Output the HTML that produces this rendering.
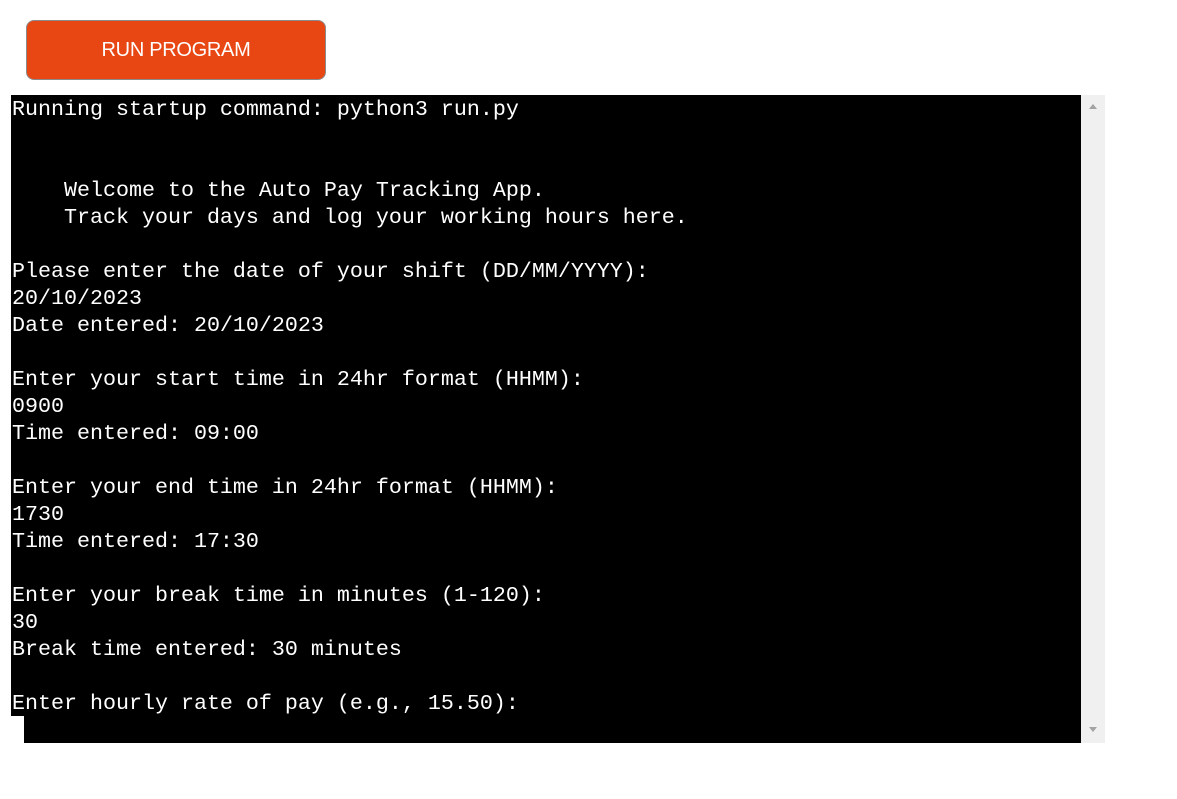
<!DOCTYPE html>
<html><head><style>
html,body{margin:0;padding:0;background:#fff;width:1177px;height:799px;overflow:hidden}
.btn{position:absolute;left:26px;top:20px;width:298px;height:58px;background:#e84612;border:1px solid #8a8a8a;border-radius:8px;color:#fff;font:20px "Liberation Sans",sans-serif;text-align:center;line-height:58px;letter-spacing:-0.3px}
.term{position:absolute;left:11px;top:95px;width:1070px;height:621px;background:#000}
.term2{position:absolute;left:24px;top:716px;width:1057px;height:27px;background:#000}
.sb{position:absolute;left:1081px;top:95px;width:24px;height:648px;background:#f0f0f0}
.up{position:absolute;left:1089px;top:104px;width:0;height:0;border-left:4px solid transparent;border-right:4px solid transparent;border-bottom:5px solid #a3a3a3}
.dn{position:absolute;left:1089px;top:727px;width:0;height:0;border-left:4px solid transparent;border-right:4px solid transparent;border-top:5px solid #a3a3a3}
pre{position:absolute;left:12px;top:96px;margin:0;color:#fff;font:21.67px/27px "Liberation Mono",monospace}
</style></head><body>
<div class="btn">RUN PROGRAM</div>
<div class="term"></div><div class="term2"></div>
<div class="sb"></div><div class="up"></div><div class="dn"></div>
<pre>Running startup command: python3 run.py


    Welcome to the Auto Pay Tracking App.
    Track your days and log your working hours here.

Please enter the date of your shift (DD/MM/YYYY):
20/10/2023
Date entered: 20/10/2023

Enter your start time in 24hr format (HHMM):
0900
Time entered: 09:00

Enter your end time in 24hr format (HHMM):
1730
Time entered: 17:30

Enter your break time in minutes (1-120):
30
Break time entered: 30 minutes

Enter hourly rate of pay (e.g., 15.50):</pre>
</body></html>
